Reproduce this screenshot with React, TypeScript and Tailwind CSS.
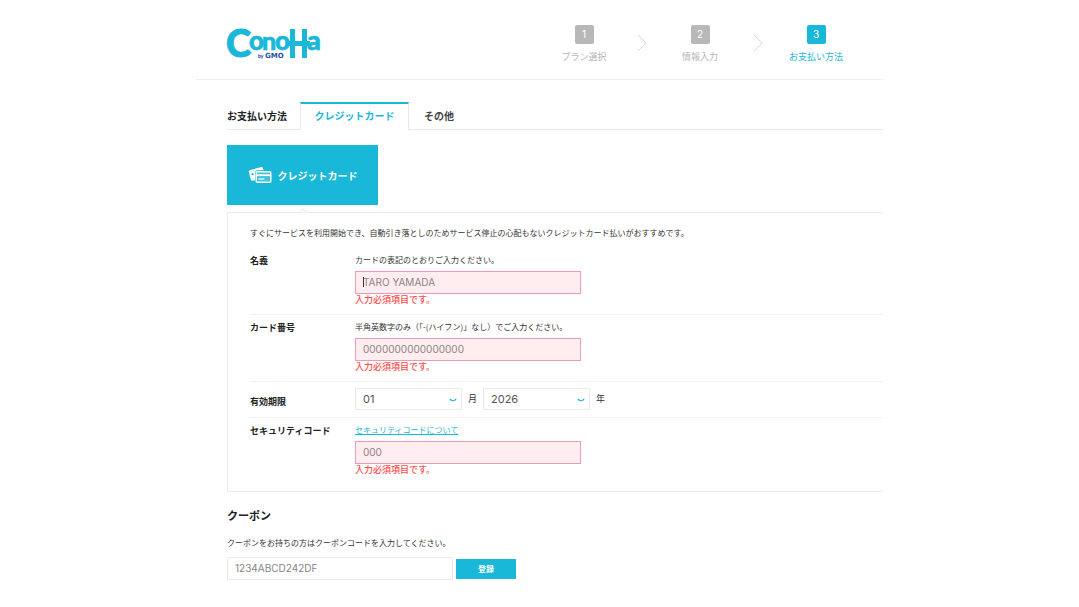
import type { ReactNode } from 'react';

const steps = [
  { number: 1, label: 'プラン選択', active: false },
  { number: 2, label: '情報入力', active: false },
  { number: 3, label: 'お支払い方法', active: true },
];

const months = ['01', '02', '03', '04', '05', '06', '07', '08', '09', '10', '11', '12'];
const years = ['2026', '2027', '2028', '2029', '2030', '2031', '2032', '2033'];

function Logo() {
  return (
    <svg width="95" height="31" viewBox="0 0 95 31" role="img" aria-label="ConoHa by GMO" className="overflow-visible font-['Lato',sans-serif]">
      <g fill="#1ab8d8" stroke="#1ab8d8" fontWeight="900">
        <text x="-1" y="28" fontSize="38" strokeWidth="1">C</text>
        <text x="22" y="21" fontSize="26" strokeWidth="0.7">o</text>
        <text x="35" y="21" fontSize="25" strokeWidth="0.5">n</text>
        <text x="48" y="21" fontSize="26" strokeWidth="0.7">o</text>
        <text x="80" y="21" fontSize="27" strokeWidth="0.7">a</text>
      </g>
      <g fill="#1ab8d8">
        <rect x="63" y="0" width="5" height="29" />
        <rect x="75" y="0" width="5" height="29" />
        <rect x="61" y="12" width="22" height="5" />
      </g>
      <text x="31" y="29" fontSize="5" fontWeight="900" fill="#1c4fa0">by</text>
      <text x="38" y="29" fontSize="7" fontWeight="700" fill="#1c4fa0" className="font-['DejaVu_Sans',sans-serif]">GMO</text>
    </svg>
  );
}

function StepArrow() {
  return (
    <svg width="10" height="18" viewBox="0 0 10 18" fill="none" stroke="#d6d6d6" className="mb-1" aria-hidden="true">
      <path d="M1 1l8 8-8 8" />
    </svg>
  );
}

function CardsIcon() {
  return (
    <svg width="24" height="18" viewBox="0 0 24 18" fill="none" aria-hidden="true">
      <path d="M1.600 4.200 13.400 1c.6-.2 1.200.1 1.400.7l.7 2.600H9.500c-1.500 0-2.500 1-2.500 2.500v7.400l-2.800.6c-.6.1-1.100-.1-1.300-.7L.8 5.500c-.2-.6.2-1.100.8-1.300z" fill="#fff" />
      <circle cx="4.600" cy="8.200" r="1.100" fill="#1ab8d8" />
      <rect x="8.200" y="5.700" width="14.600" height="10.600" rx="1.300" fill="#3fc4dd" stroke="#fff" strokeWidth="1.500" />
      <path d="M8.200 9.200h14.600" stroke="#fff" strokeWidth="1.800" />
      <path d="M10.500 13h6" stroke="#fff" strokeWidth="1.200" />
    </svg>
  );
}

function Row({ label, htmlFor, children }: { label: string; htmlFor: string; children: ReactNode }) {
  return (
    <div className="flex border-b border-[#f3f3f3] pt-[5px] pb-2">
      <label htmlFor={htmlFor} className="w-[105px] shrink-0 text-[9px] leading-4 font-bold text-[#222]">
        {label}
      </label>
      <div>{children}</div>
    </div>
  );
}

function ErrorInput({ id, placeholder }: { id: string; placeholder: string }) {
  return (
    <>
      <input
        id={id}
        type="text"
        placeholder={placeholder}
        aria-invalid="true"
        aria-describedby={`${id}-error`}
        className="mt-1 block h-[23px] w-[226px] border border-[#e79bbb] bg-[#ffedef] px-[7px] pb-px font-['Inter','Noto_Sans_CJK_JP',sans-serif] text-[10px] outline-none placeholder:text-[#8c8486]"
      />
      <p id={`${id}-error`} className="text-[9px] leading-3 font-medium text-[#ff4a48]">
        入力必須項目です。
      </p>
    </>
  );
}

function Select({ id, label, options }: { id: string; label: string; options: string[] }) {
  return (
    <div className="relative">
      <select
        id={id}
        aria-label={label}
        className="block h-[22px] w-[107px] appearance-none border border-[#ebebeb] bg-white px-[7px] font-['Inter','Noto_Sans_CJK_JP',sans-serif] text-[11px] text-[#555] outline-none"
      >
        {options.map((option) => (
          <option key={option}>{option}</option>
        ))}
      </select>
      <svg
        width="8"
        height="4"
        viewBox="0 0 8 4"
        fill="none"
        stroke="#1ab8d8"
        strokeWidth="1.300"
        className="pointer-events-none absolute top-[10px] right-[5px]"
        aria-hidden="true"
      >
        <path d="M.8.8C2.500 3.300 5.500 3.300 7.200.8" />
      </svg>
    </div>
  );
}

export default function App() {
  return (
    <div className="mx-auto max-w-[687px] bg-white font-['Noto_Sans_CJK_JP',sans-serif] text-[#333]">
      <header className="flex h-20 items-start justify-between border-b border-[#eee] pr-[27px] pl-[31px]">
        <a href="#" className="mt-[29px] block">
          <Logo />
        </a>
        <ol className="mt-[25px] flex items-center gap-[13px]">
          {steps.map((step) => (
            <li key={step.number} className="flex items-center gap-[13px]">
              {step.number > 1 && <StepArrow />}
              <div className={`flex w-20 flex-col items-center gap-[5px] ${step.active ? 'text-[#1ab8d8]' : 'text-[#b5b5b5]'}`}>
                <span
                  className={`flex size-[19px] items-center justify-center rounded-xs font-['Inter',sans-serif] text-[10px] text-white ${
                    step.active ? 'bg-[#1ab8d8]' : 'bg-[#b8b8b8]'
                  }`}
                >
                  {step.number}
                </span>
                <span className="text-[9px] leading-4">{step.label}</span>
              </div>
            </li>
          ))}
        </ol>
      </header>

      <main className="pt-[22px] pl-[31px]">
        <div className="flex h-7 text-[10px] font-bold">
          <h1 className="flex w-[73px] items-center border-b border-[#e9e9e9] text-[#222]">お支払い方法</h1>
          <button type="button" className="w-[109px] border-x border-t-2 border-x-[#e9e9e9] border-t-[#1ab8d8] pb-[3px] text-[#1ab8d8]">
            クレジットカード
          </button>
          <div className="flex flex-1 border-b border-[#e9e9e9]">
            <button type="button" className="px-[15px] text-[#444]">
              その他
            </button>
          </div>
        </div>

        <button
          type="button"
          className="mt-[15px] flex h-[60px] w-[151px] items-center justify-center gap-[6px] bg-[#1ab8d8] text-[10px] font-bold text-white"
        >
          <CardsIcon />
          クレジットカード
        </button>

        <section className="relative mt-[7px] rounded-l-xs border-y border-l border-[#e9e9e9] pt-[13px] pl-[22px]">
          <svg width="10" height="6" viewBox="0 0 10 6" fill="#fff" stroke="#e6e6e6" className="absolute -top-[5px] left-[70px]" aria-hidden="true">
            <path d="M0 4.500h1L5 .8l4 3.700h1" />
          </svg>
          <p className="mb-2 text-[8px] leading-[14px]">
            すぐにサービスを利用開始でき、自動引き落としのためサービス停止の心配もないクレジットカード払いがおすすめです。
          </p>

          <Row label="名義" htmlFor="name">
            <p className="text-[8px] leading-[14px]">カードの表記のとおりご入力ください。</p>
            <div className="relative">
              <ErrorInput id="name" placeholder="TARO YAMADA" />
              <span className="absolute top-[6px] left-2 h-[10px] w-px bg-[#333]" />
            </div>
          </Row>

          <Row label="カード番号" htmlFor="number">
            <p className="text-[8px] leading-[14px]">半角英数字のみ（「-(ハイフン)」なし）でご入力ください。</p>
            <ErrorInput id="number" placeholder="0000000000000000" />
          </Row>

          <div className="flex items-end border-b border-[#f3f3f3] pt-[6px] pb-[7px]">
            <label htmlFor="month" className="w-[105px] shrink-0 text-[9px] leading-4 font-bold text-[#222]">
              有効期限
            </label>
            <div className="flex items-center text-[9px]">
              <Select id="month" label="有効期限（月）" options={months} />
              <span className="w-[21px] text-center">月</span>
              <Select id="year" label="有効期限（年）" options={years} />
              <span className="w-[21px] text-center">年</span>
            </div>
          </div>

          <div className="flex pt-[5px] pb-[15px]">
            <label htmlFor="code" className="w-[105px] shrink-0 text-[9px] leading-4 font-bold text-[#222]">
              セキュリティコード
            </label>
            <div>
              <a href="#" className="block w-fit text-[8px] leading-[14px] text-[#1ab8d8] underline">
                セキュリティコードについて
              </a>
              <ErrorInput id="code" placeholder="000" />
            </div>
          </div>
        </section>

        <section className="mt-[15px]">
          <h2 className="text-[11px] leading-4 font-bold text-[#222]">クーポン</h2>
          <label htmlFor="coupon" className="mt-[13px] block text-[8px] leading-[14px]">
            クーポンをお持ちの方はクーポンコードを入力してください。
          </label>
          <div className="mt-[7px] flex items-center gap-[3px]">
            <input
              id="coupon"
              type="text"
              placeholder="1234ABCD242DF"
              className="h-[23px] w-[226px] border border-[#ebebeb] px-[7px] pb-px font-['Inter','Noto_Sans_CJK_JP',sans-serif] text-[10px] outline-none placeholder:text-[#858585]"
            />
            <button type="button" className="h-5 w-[60px] bg-[#1ab8d8] text-[8px] font-bold text-white">
              登録
            </button>
          </div>
        </section>
      </main>
    </div>
  );
}
